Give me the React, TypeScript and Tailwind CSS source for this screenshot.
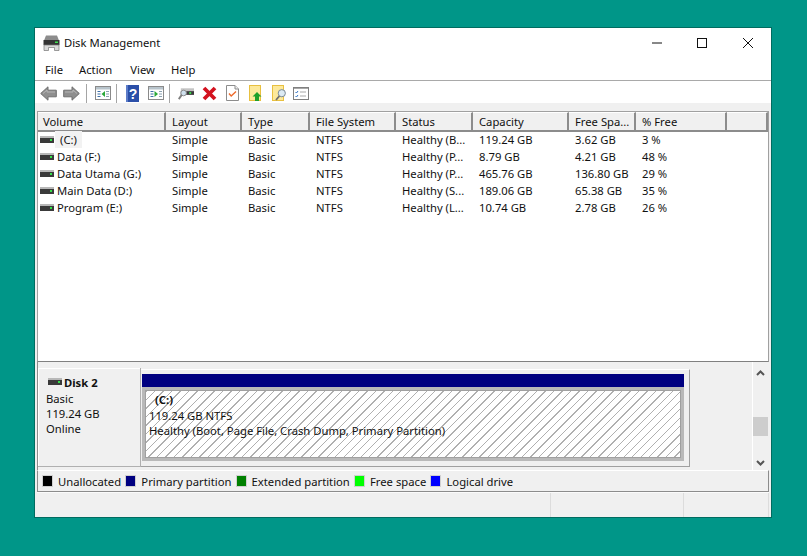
const font = { fontFamily: '"Noto Sans", sans-serif' };

const columns = 'grid grid-cols-[128px_76px_68px_86px_77px_96px_67px_91px_41px]';
const headers = ['Volume', 'Layout', 'Type', 'File System', 'Status', 'Capacity', 'Free Spa...', '% Free', ''];
const rows = [
  ['(C:)', 'Simple', 'Basic', 'NTFS', 'Healthy (B...', '119.24 GB', '3.62 GB', '3 %'],
  ['Data (F:)', 'Simple', 'Basic', 'NTFS', 'Healthy (P...', '8.79 GB', '4.21 GB', '48 %'],
  ['Data Utama (G:)', 'Simple', 'Basic', 'NTFS', 'Healthy (P...', '465.76 GB', '136.80 GB', '29 %'],
  ['Main Data (D:)', 'Simple', 'Basic', 'NTFS', 'Healthy (S...', '189.06 GB', '65.38 GB', '35 %'],
  ['Program (E:)', 'Simple', 'Basic', 'NTFS', 'Healthy (L...', '10.74 GB', '2.78 GB', '26 %'],
];
const legend: [string, string][] = [
  ['Unallocated', 'bg-[#000000]'],
  ['Primary partition', 'bg-[#000080]'],
  ['Extended partition', 'bg-[#008000]'],
  ['Free space', 'bg-[#00ff00]'],
  ['Logical drive', 'bg-[#0000ff]'],
];

function Drive() {
  return (
    <svg width="14" height="7" viewBox="0 0 14 7" className="shrink-0">
      <rect x="0" y="0" width="14" height="2" fill="#b8b8b8" />
      <rect x="0" y="2" width="14" height="5" fill="#3a3a3a" />
      <rect x="10" y="3" width="2" height="2" fill="#35e04a" />
    </svg>
  );
}

function AppIcon() {
  return (
    <svg width="17" height="16" viewBox="0 0 17 16">
      <path d="M3 0.5h11l2 5H1z" fill="#8c8c8c" />
      <rect x="0.5" y="5" width="16" height="5" fill="#333" />
      <rect x="12" y="6.5" width="3" height="1.5" fill="#3fe04f" />
      <path d="M1 10h15v5.5h-4.5v-3h-6v3H1z" fill="#d9d9d9" stroke="#777" strokeWidth="0.7" />
    </svg>
  );
}

function Arrow({ flip }: { flip?: boolean }) {
  return (
    <svg width="17" height="15" viewBox="0 0 17 15" style={flip ? { transform: 'scaleX(-1)' } : undefined}>
      <path d="M0.7 7.5 8 0.8v3.4h8.3v6.6H8v3.4z" fill="#8f8f8f" stroke="#6f6f6f" />
      <path d="M3 7.5 7 4v2h8" fill="none" stroke="#b5b5b5" />
    </svg>
  );
}

function Sep() {
  return <div className="h-[19px] w-px bg-[#a5a5a5]" />;
}

function PaneIcon({ right }: { right?: boolean }) {
  return (
    <svg width="16" height="14" viewBox="0 0 16 14">
      <rect x="0.5" y="0.5" width="15" height="13" fill="#fff" stroke="#8a8a8a" />
      <rect x="1" y="1" width="14" height="2.5" fill="#b8c4cc" />
      <path d="M2.5 5.5h3M2.5 8h3M2.5 10.5h3" stroke="#3d6fa8" />
      <path d="M11 5.5h3M11 8h3M11 10.5h3" stroke="#8aa0b0" />
      <path d={right ? 'M6.5 5v6l3.5-3z' : 'M10 5v6L6.5 8z'} fill="#2aa838" />
    </svg>
  );
}

function HelpIcon() {
  return (
    <svg width="13" height="17" viewBox="0 0 13 17">
      <rect width="13" height="17" fill="#2b4fa8" />
      <rect x="0" y="0" width="2" height="17" fill="#5c7cc8" />
      <text x="7" y="13.5" textAnchor="middle" fontSize="14" fontWeight="700" fill="#fff" fontFamily="Liberation Sans, sans-serif">?</text>
    </svg>
  );
}

function ConnectIcon() {
  return (
    <svg width="16" height="16" viewBox="0 0 17 16">
      <rect x="3" y="3" width="14" height="3" fill="#c4c4c4" />
      <rect x="3" y="6" width="14" height="4" fill="#3b3b3b" />
      <rect x="12" y="7" width="2" height="2" fill="#3fe04f" />
      <circle cx="6" cy="8" r="3" fill="#cfe0ee" stroke="#8a8a8a" />
      <path d="M4 10 0.8 14.5" stroke="#7f7f7f" strokeWidth="2" />
    </svg>
  );
}

function DeleteIcon() {
  return (
    <svg width="15" height="15" viewBox="0 0 15 15">
      <path d="M2 2 13 13M13 2 2 13" stroke="#d3121f" strokeWidth="3.8" />
    </svg>
  );
}

function CheckDoc() {
  return (
    <svg width="13" height="16" viewBox="0 0 13 16">
      <path d="M0.5 0.5h8.5l3.5 3.5v11.5h-12z" fill="#fff" stroke="#8c8c8c" />
      <path d="M9 0.5v3.5h3.5" fill="#eee" stroke="#8c8c8c" />
      <path d="M3 8.5 5.2 11 10 6.5" fill="none" stroke="#ee6a2b" strokeWidth="1.4" />
    </svg>
  );
}

function UpFolder() {
  return (
    <svg width="13" height="16" viewBox="0 0 13 16">
      <rect x="0.5" y="0.5" width="11" height="15" fill="#fde99a" stroke="#e8c040" />
      <path d="M8 7 12.5 11.5H10V16H6v-4.5H3.5z" fill="#1fa02a" />
    </svg>
  );
}

function SearchFolder() {
  return (
    <svg width="15" height="16" viewBox="0 0 15 16">
      <rect x="0.5" y="0.5" width="11" height="15" fill="#fde99a" stroke="#e8c040" />
      <circle cx="9.8" cy="8.2" r="3.6" fill="#dceaf3" stroke="#7c8a94" />
      <path d="M7.4 11 4 15" stroke="#6f6f6f" strokeWidth="1.8" />
    </svg>
  );
}

function ListIcon() {
  return (
    <svg width="16" height="13" viewBox="0 0 16 13">
      <rect x="0.5" y="0.5" width="15" height="12" fill="#fff" stroke="#808080" />
      <rect x="1" y="1" width="14" height="1" fill="#a8a8a8" />
      <path d="M2.5 5 3.5 6 5 4M2.5 9 3.5 10 5 8" fill="none" stroke="#2f72c4" />
      <path d="M7 5h6M7 9h6" stroke="#a8a8a8" />
    </svg>
  );
}

export default function App() {
  return (
    <div className="h-[556px] w-[807px] bg-[#009688] pl-[35px] pt-[28px] text-[11.25px] leading-[17px] text-[#111111]" style={font}>
      <div className="flex h-[489px] w-[736px] flex-col bg-white shadow-[0_0_0_1px_rgba(0,80,70,0.6)]">
        {/* Title bar */}
        <div className="flex h-[31px] shrink-0 items-center pb-[2px] pl-[8px]">
          <AppIcon />
          <span className="ml-[4px]">Disk Management</span>
          <div className="ml-auto flex items-center">
            <svg width="46" height="12" viewBox="0 0 46 12"><path d="M18 6h10" stroke="#111" /></svg>
            <svg width="46" height="12" viewBox="0 0 46 12" className="ml-[-1px]"><rect x="18.5" y="1.5" width="9" height="9" fill="none" stroke="#111" /></svg>
            <svg width="46" height="12" viewBox="0 0 46 12"><path d="M18 1l10 10M28 1 18 11" stroke="#111" /></svg>
          </div>
        </div>
        {/* Menu */}
        <div className="flex h-[21px] shrink-0 items-center pl-[10px]">
          <span>File</span>
          <span className="ml-[16px]">Action</span>
          <span className="ml-[18px]">View</span>
          <span className="ml-[16px]">Help</span>
        </div>
        {/* Toolbar */}
        <div className="flex h-[23px] shrink-0 items-center border-t border-t-[#a9a9a9] pl-[5px] pt-[2px]">
          <Arrow />
          <div className="w-[6px]" />
          <Arrow flip />
          <div className="w-[6px]" />
          <Sep />
          <div className="w-[8px]" />
          <PaneIcon />
          <div className="w-[5px]" />
          <Sep />
          <div className="w-[9px]" />
          <HelpIcon />
          <div className="w-[9px]" />
          <PaneIcon right />
          <div className="w-[5px]" />
          <Sep />
          <div className="w-[8px]" />
          <ConnectIcon />
          <div className="w-[8px]" />
          <DeleteIcon />
          <div className="w-[9px]" />
          <CheckDoc />
          <div className="w-[10px]" />
          <UpFolder />
          <div className="w-[10px]" />
          <SearchFolder />
          <div className="w-[6px]" />
          <ListIcon />
        </div>
        {/* Body */}
        <div className="flex min-h-0 flex-1 flex-col bg-[#f0f0f0] px-[2px] pt-[8px]">
          {/* Volume list */}
          <div className="h-[251px] shrink-0 border border-x-[#a0a0a0] border-t-[#a0a0a0] border-b-[#808080] bg-white">
            <div className={`${columns} h-[19px] bg-[#f0f0f0]`}>
              {headers.map((h, i) => (
                <div key={i} className={`border-t border-r-2 border-b-2 border-t-white border-r-[#8c8c8c] border-b-[#8c8c8c] leading-[17px] ${i === 0 ? 'pl-[5px]' : 'pl-[6px]'}`}>
                  {h}
                </div>
              ))}
            </div>
            {rows.map((r, ri) => (
              <div key={ri} className={`${columns} h-[17px]`}>
                {r.map((c, i) => (
                  <div key={i} className={i === 0 ? 'flex items-center whitespace-nowrap pl-[2px]' : 'whitespace-nowrap pl-[6px]'}>
                    {i === 0 && <Drive />}
                    {i === 0 ? (
                      ri === 0 ? (
                        <span className="ml-[1px] bg-[#f2f2f2] px-[5px]">{c}</span>
                      ) : (
                        <span className="ml-[3px]">{c}</span>
                      )
                    ) : (
                      c
                    )}
                  </div>
                ))}
              </div>
            ))}
          </div>
          {/* Disk pane */}
          <div className="flex h-[108px] shrink-0 border-l border-l-[#8c8c8c] pt-[6px]">
            <div className="h-[99px] w-[103px] shrink-0 border-r border-b border-r-[#b0b0b0] border-b-[#b0b0b0] pl-[8px] pt-[7px] shadow-[inset_1px_1px_0_#fff]">
              <div className="flex items-center gap-[2px] pl-[2px] font-bold leading-[16px]">
                <div className="mt-[-3px]"><Drive /></div>
                <span>Disk 2</span>
              </div>
              <div className="leading-[15px]">Basic</div>
              <div className="leading-[15px]">119.24 GB</div>
              <div className="leading-[15px]">Online</div>
            </div>
            <div className="mt-[1px] h-[98px] w-[549px] shrink-0 border-t border-r border-b border-t-white border-r-[#a0a0a0] border-b-[#a0a0a0] pl-[1px] pr-[5px] pt-[4px]">
              <div className="h-[13px] bg-[#000080]" />
              <div className="h-[74px] bg-[#b9b9b9] p-[3px]">
                <div className="h-[68px] border border-[#a0a0a0] bg-[repeating-linear-gradient(135deg,#b0b0b0_0,#b0b0b0_1px,#ffffff_1px,#ffffff_6px)] pl-[3px] pt-[1px]">
                  <div className="pl-[6px] font-bold leading-[16px]">(C:)</div>
                  <div className="leading-[15px]">119.24 GB NTFS</div>
                  <div className="leading-[15px]">Healthy (Boot, Page File, Crash Dump, Primary Partition)</div>
                </div>
              </div>
            </div>
            <div className="ml-auto mr-[1px] mt-[-6px] flex w-[16px] shrink-0 flex-col items-center border-l border-l-white pt-[7px]">
              <svg width="9" height="7" viewBox="0 0 9 7"><path d="M1 6 4.5 2.5 8 6" fill="none" stroke="#555" strokeWidth="2" /></svg>
              <div className="mt-[41px] h-[19px] w-[15px] bg-[#cdcdcd]" />
              <div className="flex-1" />
              <svg className="mb-[3px]" width="9" height="7" viewBox="0 0 9 7"><path d="M1 1 4.5 4.5 8 1" fill="none" stroke="#555" strokeWidth="2" /></svg>
            </div>
          </div>
          {/* Legend */}
          <div className="flex h-[22px] shrink-0 items-center border border-x-[#8c8c8c] border-t-white border-b-[#8c8c8c] pl-[4px]">
            {legend.map(([label, color]) => (
              <div key={label} className="mr-[4.2px] flex items-center">
                <div className={`h-[12px] w-[11px] border border-[#d0d0d0] ${color}`} />
                <span className="ml-[5px]">{label}</span>
              </div>
            ))}
          </div>
          {/* Status bar */}
          <div className="flex h-[25px] shrink-0 border-t border-t-[#fbfbfb]">
            <div className="w-[514px] border-r border-r-[#dcdcdc]" />
            <div className="w-[133px] border-r border-r-[#dcdcdc]" />
            <div className="w-[85px] border-r border-r-[#dcdcdc]" />
          </div>
        </div>
      </div>
    </div>
  );
}
